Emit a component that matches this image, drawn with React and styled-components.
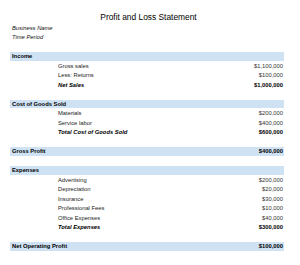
import React from "react";
import styled, { createGlobalStyle } from "styled-components";

const Global = createGlobalStyle`
  html, body { margin: 0; padding: 0; background: #ffffff; }
  body { font-family: "Liberation Sans", Arial, sans-serif; color: #111; }
`;

const Page = styled.div`
  width: 300px;
  height: 265px;
  box-sizing: border-box;
  padding-left: 10px;
  overflow: hidden;
`;

const Title = styled.h1`
  margin: 0;
  box-sizing: border-box;
  height: 23.75px;
  padding: 12px 0 0 3px;
  width: 274px;
  font-size: 8.4px;
  line-height: 10px;
  font-weight: normal;
  text-align: center;
  color: #000;
`;

const Meta = styled.div`
  height: 9.5px;
  line-height: 9.5px;
  padding-left: 2px;
  font-size: 5.8px;
  font-style: italic;
  color: #111;
`;

const Sheet = styled.div`
  width: 274px;
  display: flex;
  flex-direction: column;
  padding-top: 9.5px;
`;

const Row = styled.div`
  display: grid;
  grid-template-columns: 48px 1fr auto;
  align-items: center;
  box-sizing: border-box;
  height: 9.5px;
  padding-bottom: 1px;
  background: ${(p) => (p.$band ? "#cfe2f3" : "transparent")};
  background-clip: content-box;
  font-size: 5.8px;
  line-height: 8.5px;
`;

const HeadLabel = styled.span`
  grid-column: 1 / 3;
  padding-left: 2px;
  font-weight: bold;
  color: #000;
  white-space: nowrap;
`;

const ItemLabel = styled.span`
  grid-column: 2;
  color: ${(p) => (p.$total ? "#000" : "#222")};
  white-space: nowrap;
  font-weight: ${(p) => (p.$total ? "bold" : "normal")};
  font-style: ${(p) => (p.$total ? "italic" : "normal")};
`;

const Value = styled.span`
  grid-column: 3;
  padding-right: 1px;
  text-align: right;
  white-space: nowrap;
  color: ${(p) => (p.$strong ? "#000" : "#333")};
  font-weight: ${(p) => (p.$strong ? "bold" : "normal")};
`;

const blocks = [
  {
    title: "Income",
    items: [
      ["Gross sales", "$1,100,000"],
      ["Less: Returns", "$100,000"],
    ],
    total: ["Net Sales", "$1,000,000"],
  },
  {
    title: "Cost of Goods Sold",
    items: [
      ["Materials", "$200,000"],
      ["Service labor", "$400,000"],
    ],
    total: ["Total Cost of Goods Sold", "$600,000"],
  },
  { title: "Gross Profit", value: "$400,000" },
  {
    title: "Expenses",
    items: [
      ["Advertising", "$200,000"],
      ["Depreciation", "$20,000"],
      ["Insurance", "$30,000"],
      ["Professional Fees", "$10,000"],
      ["Office Expenses", "$40,000"],
    ],
    total: ["Total Expenses", "$300,000"],
  },
  { title: "Net Operating Profit", value: "$100,000" },
];

export default function App() {
  return (
    <Page>
      <Global />
      <Title>Profit and Loss Statement</Title>
      <Meta>Business Name</Meta>
      <Meta>Time Period</Meta>
      <Sheet>
        {blocks.map((b, i) => (
          <React.Fragment key={b.title}>
            {i > 0 && <Row />}
            <Row $band>
              <HeadLabel>{b.title}</HeadLabel>
              {b.value && <Value $strong>{b.value}</Value>}
            </Row>
            {(b.items || []).map(([l, v]) => (
              <Row key={l}>
                <ItemLabel>{l}</ItemLabel>
                <Value>{v}</Value>
              </Row>
            ))}
            {b.total && (
              <Row>
                <ItemLabel $total>{b.total[0]}</ItemLabel>
                <Value $strong>{b.total[1]}</Value>
              </Row>
            )}
          </React.Fragment>
        ))}
      </Sheet>
    </Page>
  );
}
